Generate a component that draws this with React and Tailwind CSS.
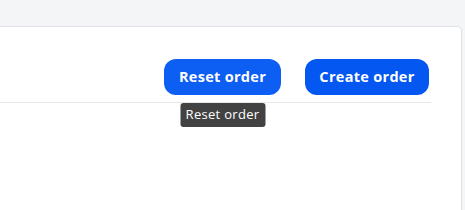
import React from 'react';

export default function App() {
  return (
    <div className="h-[210px] bg-[#f4f5f7] pt-[26px] pr-[3px] font-['Open_Sans',sans-serif] overflow-hidden">
      <div className="h-[220px] bg-white border border-l-0 border-[#dfe1e5] rounded-tr-[5px]">
        <div className="mr-[30px] border-b border-[#e6e7ea] pt-[32px] pb-[7px] flex justify-end gap-[24px] pr-[2px]">
          <div className="relative">
            <button className="h-[36px] w-[117px] rounded-[12px] bg-[#0d5ef2] text-white text-[14.5px] font-bold tracking-[0.3px]">
              Reset order
            </button>
            <div className="absolute left-1/2 -translate-x-1/2 top-[44px] w-[85px] h-[24px] rounded-[3px] bg-[#424242] text-white text-[13px] tracking-[0.3px] flex items-center justify-center">
              Reset order
            </div>
          </div>
          <button className="h-[36px] w-[124px] rounded-[12px] bg-[#0457f0] text-white text-[14.5px] font-bold tracking-[0.3px]">
            Create order
          </button>
        </div>
      </div>
    </div>
  );
}
